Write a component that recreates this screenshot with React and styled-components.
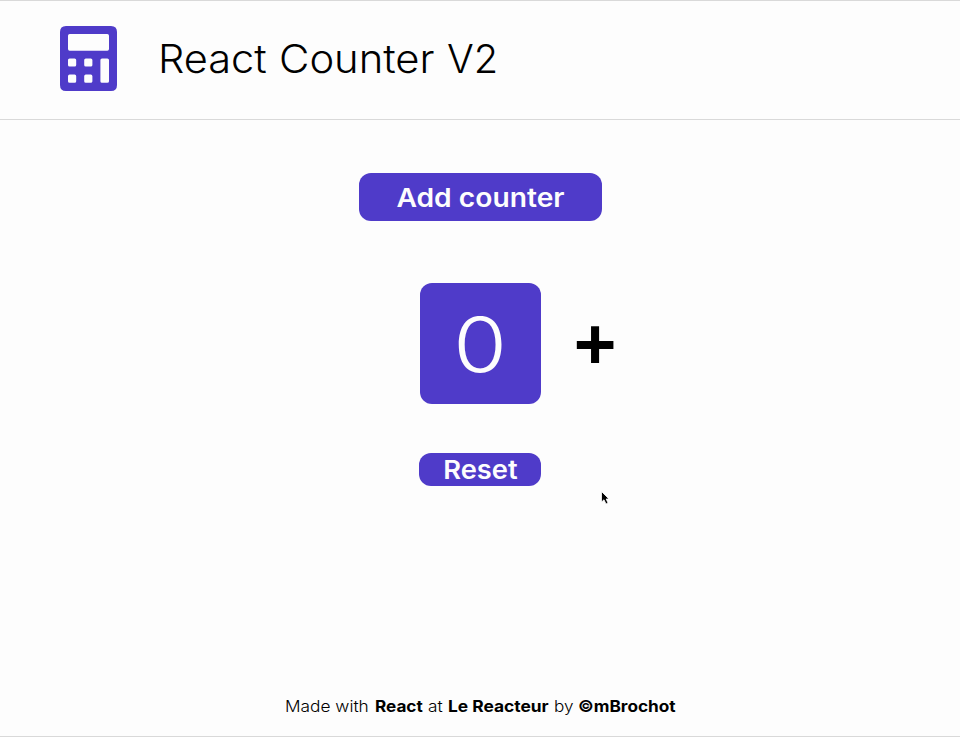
import React, { useState } from "react";
import styled, { createGlobalStyle } from "styled-components";

const GlobalStyle = createGlobalStyle`
  * { box-sizing: border-box; }
  body { margin: 0; background: #fdfdfd; color: #000; font-family: Inter, "Open Sans", sans-serif; }
  button { border: 0; padding: 0; font-family: inherit; cursor: pointer; }
`;

const Page = styled.div`
  height: 737px;
  display: flex;
  flex-direction: column;
  border-top: 1px solid #d9d9d9;
  border-bottom: 1px solid #d9d9d9;
  overflow: hidden;
`;

const Header = styled.header`
  height: 119px;
  flex: none;
  display: flex;
  align-items: center;
  padding: 0 60px 3px;
  border-bottom: 1px solid #d9d9d9;
`;

const Logo = styled.svg`
  display: block;
  width: 57px;
  height: 65px;
  margin-right: 41px;
`;

const Title = styled.h1`
  margin: 0;
  display: flex;
  font-size: 39px;
  font-weight: 330;
  line-height: 48px;
  white-space: nowrap;
`;

const Word = styled.span`
  width: ${(p) => p.$width}px;
  transform: scaleX(${(p) => p.$stretch});
  transform-origin: left center;
`;

const Main = styled.main`
  flex: 1;
  display: flex;
  flex-direction: column;
  align-items: center;
  padding-top: 53px;
`;

const Button = styled.button`
  width: ${(p) => p.$width}px;
  height: ${(p) => p.$height}px;
  border-radius: 12px;
  background: #4f3bc9;
  color: #fdfdfd;
  font-size: 26px;
  font-weight: 570;
  line-height: 32px;
  white-space: nowrap;
`;

const Label = styled.span`
  display: inline-block;
  padding-top: ${(p) => p.$drop || 0}px;
  transform: scaleX(${(p) => p.$stretch});
`;

const CounterRow = styled.div`
  display: grid;
  grid-template-columns: 121px 121px 121px;
  margin: 62px 0 49px 1px;
`;

const Value = styled.div`
  grid-column: 2;
  height: 121px;
  display: flex;
  align-items: center;
  justify-content: center;
  border-radius: 12px;
  background: #4f3bc9;
  color: #fdfdfd;
`;

const Digit = styled.span`
  font-size: 75px;
  font-weight: 350;
  line-height: 80px;
  transform: translateY(0.5px) scaleX(1.16);
`;

const Increment = styled.button`
  width: 108px;
  background: none;
  color: #000;
  font-family: "Liberation Sans", Arial, sans-serif;
  font-size: 73px;
  font-weight: 700;
  line-height: 80px;
`;

const Footer = styled.footer`
  flex: none;
  height: 61px;
  display: flex;
  justify-content: center;
  align-items: center;
  font-size: 16px;
  line-height: 20px;
  white-space: nowrap;
`;

const Credit = styled.span`
  width: ${(p) => p.$width}px;
  font-weight: ${(p) => (p.$bold ? 700 : 350)};
  transform: scaleX(${(p) => p.$stretch});
  transform-origin: left center;
`;

const Pointer = styled.svg`
  position: absolute;
  left: 600px;
  top: 490px;
  width: 11px;
  height: 16px;
  pointer-events: none;
`;

export default function App() {
  const [count, setCount] = useState(0);
  return (
    <Page>
      <GlobalStyle />
      <Header>
        <Logo viewBox="0 0 57 65">
          <path
            fill="#4f3bc9"
            fillRule="evenodd"
            d="M6 0H51Q57 0 57 6V59Q57 65 51 65H6Q0 65 0 59V6Q0 0 6 0ZM9.7 8Q8 8 8 9.7V23Q8 24.7 9.7 24.7H47.3Q49 24.7 49 23V9.7Q49 8 47.3 8ZM9.6 32.4Q8 32.4 8 34V39Q8 40.6 9.6 40.6H14.6Q16.2 40.6 16.2 39V34Q16.2 32.4 14.6 32.4ZM25.8 32.4Q24.2 32.4 24.2 34V39Q24.2 40.6 25.8 40.6H30.8Q32.4 40.6 32.4 39V34Q32.4 32.4 30.8 32.4ZM42 32.4Q40.4 32.4 40.4 34V55.2Q40.4 56.8 42 56.8H47.3Q49 56.8 49 55.2V34Q49 32.4 47.3 32.4ZM9.6 48.6Q8 48.6 8 50.2V55.2Q8 56.8 9.6 56.8H14.6Q16.2 56.8 16.2 55.2V50.2Q16.2 48.6 14.6 48.6ZM25.8 48.6Q24.2 48.6 24.2 50.2V55.2Q24.2 56.8 25.8 56.8H30.8Q32.4 56.8 32.4 55.2V50.2Q32.4 48.6 30.8 48.6Z"
          />
        </Logo>
        <Title>
          <Word $width={121} $stretch={1.065}>React </Word>
          <Word $width={168} $stretch={1.07}>Counter </Word>
          <Word $width={50} $stretch={1.02}>V2</Word>
        </Title>
      </Header>
      <Main>
        <Button $width={243} $height={48}>
          <Label $drop={2} $stretch={1.085}>Add counter</Label>
        </Button>
        <CounterRow>
          <Value><Digit>{count}</Digit></Value>
          <Increment onClick={() => setCount(count + 1)}>+</Increment>
        </CounterRow>
        <Button $width={122} $height={33} onClick={() => setCount(0)}>
          <Label $stretch={1.05}>Reset</Label>
        </Button>
      </Main>
      <Footer>
        <Credit $width={90} $stretch={1.08}>Made with</Credit>
        <Credit $bold $width={53} $stretch={1.07}>React</Credit>
        <Credit $width={20.5} $stretch={1.08}>at</Credit>
        <Credit $bold $width={106} $stretch={1.085}>Le Reacteur</Credit>
        <Credit $width={23.5} $stretch={1.07}>by</Credit>
        <Credit $bold $width={98} $stretch={1.075}>©mBrochot</Credit>
      </Footer>
      <Pointer viewBox="0 0 11 16">
        <path d="M1.5 1.5V12L4 9.8L6 14L8 13L6.2 9H9Z" fill="#000" stroke="#fff" strokeWidth="0.8" />
      </Pointer>
    </Page>
  );
}
